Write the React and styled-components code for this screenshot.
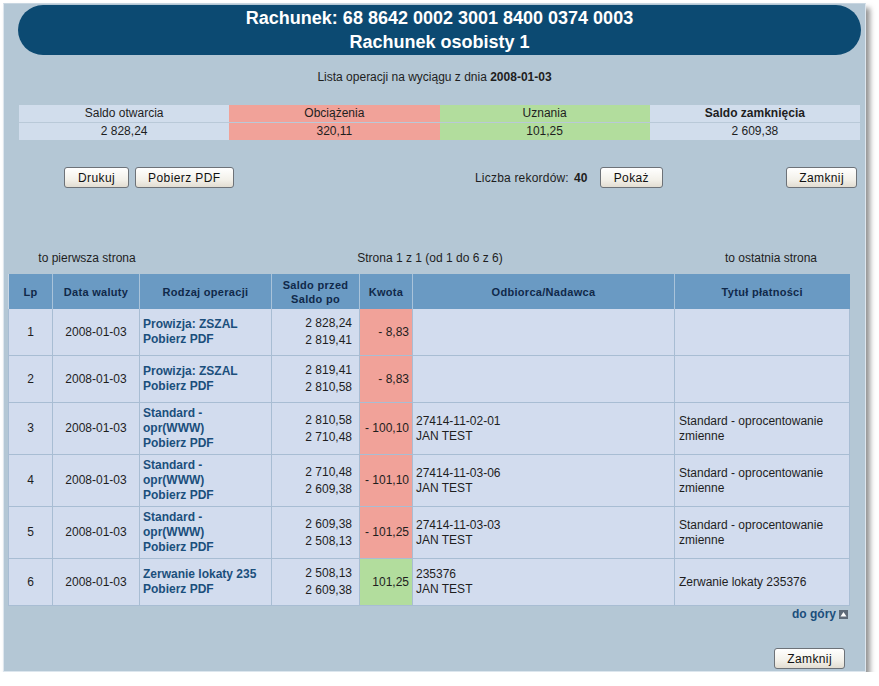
import React from 'react';
import styled, { createGlobalStyle } from 'styled-components';

const GlobalStyle = createGlobalStyle`
  html, body {
    margin: 0;
    padding: 0;
    background: #ffffff;
  }
  body {
    font-family: 'Liberation Sans', Arial, sans-serif;
    font-size: 12px;
    color: #1e1e1e;
  }
`;

// STYLED DIV
const Frame = styled.div`
  position: relative;
  box-sizing: border-box;
  margin: 3px 0 0 3px;
  width: 863px;
  height: 669px;
  background: #b4c7d5;
  border: 1px solid #dde6ee;
  border-top-color: #c8d6e1;
  box-shadow: 4px 5px 5px rgba(60, 60, 60, 0.55);
  display: flex;
  flex-direction: column;
`;

const Banner = styled.div`
  margin: 1px 4px 0 14px;
  height: 50px;
  border-radius: 25px;
  background: #0c4a72;
  color: #ffffff;
  font-weight: bold;
  font-size: 18px;
  line-height: 24px;
  text-align: center;
  display: flex;
  flex-direction: column;
  justify-content: center;
`;

const Caption = styled.div`
  margin-top: 15px;
  text-align: center;
  font-size: 12px;
  line-height: 14px;
  b {
    font-weight: bold;
  }
`;

const Summary = styled.div`
  margin: 21px 5px 0 15px;
  display: grid;
  grid-template-columns: repeat(4, 1fr);
`;

const SumCell = styled.div`
  height: 17px;
  line-height: 17px;
  text-align: center;
  font-weight: ${(p) => (p.$bold ? 'bold' : 'normal')};
  background: ${(p) =>
    p.$tone === 'red' ? '#f1a299' : p.$tone === 'green' ? '#b2dd9d' : '#d1ddec'};
  border-top: ${(p) => (p.$top ? 'none' : '1px solid #b9c9d8')};
`;

const ToolRow = styled.div`
  margin-top: 27px;
  display: grid;
  grid-template-columns: 411px 1fr auto;
  align-items: center;
  padding: 0 8px 0 60px;
`;

const Group = styled.div`
  display: flex;
  align-items: center;
  gap: ${(p) => p.$gap ?? 6}px;
`;

const Button = styled.button`
  box-sizing: border-box;
  height: 21px;
  padding: 0 ${(p) => p.$pad || 13}px;
  font-family: 'Liberation Sans', Arial, sans-serif;
  font-size: 12px;
  letter-spacing: 0.4px;
  color: #111;
  background: linear-gradient(#ffffff, #f3f1ea 60%, #e2ddd2);
  border: 1px solid #6d7278;
  border-radius: 3px;
  cursor: pointer;
`;

const Records = styled.span`
  margin-right: 12px;
  letter-spacing: 0.2px;
  b {
    margin-left: 5px;
  }
`;

const Pager = styled.div`
  margin: 63px 17px 0 4px;
  display: grid;
  grid-template-columns: 158px 1fr 154px;
  text-align: center;
  line-height: 14px;
`;

const Table = styled.table`
  margin: 9px 0 0 4px;
  width: 841px;
  border-collapse: collapse;
  table-layout: fixed;
  border-left: 1px solid #c9d7e6;
`;

const Th = styled.th`
  height: 35px;
  padding: 0 3px;
  background: #6a9ac3;
  color: #10294a;
  font-size: 11px;
  font-weight: bold;
  letter-spacing: 0.3px;
  line-height: 14px;
  text-align: center;
  border-left: 1px solid #a9c3da;
  &:first-child {
    border-left: none;
  }
`;

const Td = styled.td`
  padding: 3px ${(p) => p.$padR ?? 4}px 3px ${(p) => p.$padL ?? 4}px;
  background: ${(p) =>
    p.$tone === 'red' ? '#f1a299' : p.$tone === 'green' ? '#b2dd9d' : '#d2dcee'};
  text-align: ${(p) => p.$align || 'left'};
  vertical-align: middle;
  line-height: 15px;
  border: 1px solid #a8bdd3;
  border-top: none;
`;

const OpLink = styled.a`
  display: block;
  color: #1b4f7c;
  font-weight: bold;
  text-decoration: none;
`;

const Balance = styled.div`
  padding: 3px 0;
  line-height: 17px;
`;

const TopLink = styled.div`
  margin: 1px 17px 0 0;
  display: flex;
  justify-content: flex-end;
  align-items: center;
  gap: 3px;
  line-height: 14px;
  a {
    color: #1b4f7c;
    font-weight: bold;
    text-decoration: none;
  }
`;

const Footer = styled.div`
  margin-top: auto;
  margin-bottom: 2px;
  display: flex;
  justify-content: flex-end;
  padding-right: 20px;
`;
// STYLED DIV

const UpIcon = () => (
  <svg width="9" height="9" viewBox="0 0 9 9">
    <rect width="9" height="9" fill="#5e6a78" />
    <path d="M4.5 2 L7.5 6.5 L1.5 6.5 Z" fill="#ffffff" />
  </svg>
);

const rows = [
  { op: ['Prowizja: ZSZAL'], saldo: ['2 828,24', '2 819,41'], kwota: '- 8,83', tone: 'red', who: [], title: '' },
  { op: ['Prowizja: ZSZAL'], saldo: ['2 819,41', '2 810,58'], kwota: '- 8,83', tone: 'red', who: [], title: '' },
  { op: ['Standard -', 'opr(WWW)'], saldo: ['2 810,58', '2 710,48'], kwota: '- 100,10', tone: 'red', who: ['27414-11-02-01', 'JAN TEST'], title: 'Standard - oprocentowanie zmienne' },
  { op: ['Standard -', 'opr(WWW)'], saldo: ['2 710,48', '2 609,38'], kwota: '- 101,10', tone: 'red', who: ['27414-11-03-06', 'JAN TEST'], title: 'Standard - oprocentowanie zmienne' },
  { op: ['Standard -', 'opr(WWW)'], saldo: ['2 609,38', '2 508,13'], kwota: '- 101,25', tone: 'red', who: ['27414-11-03-03', 'JAN TEST'], title: 'Standard - oprocentowanie zmienne' },
  { op: ['Zerwanie lokaty 235'], saldo: ['2 508,13', '2 609,38'], kwota: '101,25', tone: 'green', who: ['235376', 'JAN TEST'], title: 'Zerwanie lokaty 235376' },
];

const cols = [44, 87, 132, 88, 53, 262, 175];

export default function App() {
  return (
    <>
      <GlobalStyle />
      <Frame>
        <Banner>
          <div>Rachunek: 68 8642 0002 3001 8400 0374 0003</div>
          <div>Rachunek osobisty 1</div>
        </Banner>

        <Caption>
          Lista operacji na wyciągu z dnia <b>2008-01-03</b>
        </Caption>

        <Summary>
          <SumCell $top>Saldo otwarcia</SumCell>
          <SumCell $top $tone='red'>Obciążenia</SumCell>
          <SumCell $top $tone='green'>Uznania</SumCell>
          <SumCell $top $bold>Saldo zamknięcia</SumCell>
          <SumCell>2 828,24</SumCell>
          <SumCell $tone='red'>320,11</SumCell>
          <SumCell $tone='green'>101,25</SumCell>
          <SumCell>2 609,38</SumCell>
        </Summary>

        <ToolRow>
          <Group>
            <Button>Drukuj</Button>
            <Button $pad={12}>Pobierz PDF</Button>
          </Group>
          <Group $gap={0}>
            <Records>
              Liczba rekordów:<b>40</b>
            </Records>
            <Button $pad={13}>Pokaż</Button>
          </Group>
          <Button $pad={12}>Zamknij</Button>
        </ToolRow>

        <Pager>
          <span>to pierwsza strona</span>
          <span>Strona 1 z 1 (od 1 do 6 z 6)</span>
          <span>to ostatnia strona</span>
        </Pager>

        <Table>
          <colgroup>
            {cols.map((w, i) => (
              <col key={i} style={{ width: w }} />
            ))}
          </colgroup>
          <thead>
            <tr>
              <Th>Lp</Th>
              <Th>Data waluty</Th>
              <Th>Rodzaj operacji</Th>
              <Th>
                Saldo przed
                <br />
                Saldo po
              </Th>
              <Th>Kwota</Th>
              <Th>Odbiorca/Nadawca</Th>
              <Th>Tytuł płatności</Th>
            </tr>
          </thead>
          <tbody>
            {rows.map((r, i) => (
              <tr key={i}>
                <Td $align='center'>{i + 1}</Td>
                <Td $align='center'>2008-01-03</Td>
                <Td $padL={3}>
                  {r.op.map((l) => (
                    <OpLink key={l}>{l}</OpLink>
                  ))}
                  <OpLink>Pobierz PDF</OpLink>
                </Td>
                <Td $align='right' $padR={7}>
                  <Balance>
                    {r.saldo[0]}
                    <br />
                    {r.saldo[1]}
                  </Balance>
                </Td>
                <Td $align='right' $tone={r.tone} $padR={3} $padL={2}>
                  {r.kwota}
                </Td>
                <Td $padL={3}>
                  {r.who.map((l) => (
                    <div key={l}>{l}</div>
                  ))}
                </Td>
                <Td>{r.title}</Td>
              </tr>
            ))}
          </tbody>
        </Table>

        <TopLink>
          <a href='#top'>do góry</a>
          <UpIcon />
        </TopLink>

        <Footer>
          <Button $pad={12}>Zamknij</Button>
        </Footer>
      </Frame>
    </>
  );
}
